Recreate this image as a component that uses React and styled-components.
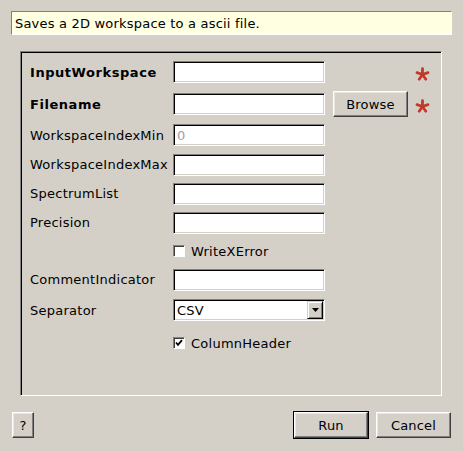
import styled, { createGlobalStyle } from "styled-components"

const GlobalStyle = createGlobalStyle`
  html, body {
    margin: 0;
    padding: 0;
    background: #d4d0c8;
  }
  body {
    font-family: "DejaVu Sans", "Liberation Sans", sans-serif;
    font-size: 13px;
    letter-spacing: 0.2px;
    color: #000;
  }
`

const Window = styled.div`
  width: 463px;
  height: 451px;
  box-sizing: border-box;
  padding-top: 11px;
  background: #d4d0c8;
`

const Description = styled.div`
  margin: 0 11px;
  height: 24px;
  box-sizing: border-box;
  padding-left: 3px;
  display: flex;
  align-items: center;
  background: #ffffe1;
  border: 1px solid;
  border-color: #808080 #ffffff #ffffff #808080;
`

const Panel = styled.div`
  margin: 16px 0 0 20px;
  width: 422px;
  height: 345px;
  box-sizing: border-box;
  padding: 4px 0 0 9px;
  border: 1px solid;
  border-color: #808080 #ffffff #ffffff #808080;
  box-shadow: inset 1px 1px 0 #000;
`

const Row = styled.div`
  display: grid;
  grid-template-columns: 143px 152px 83px 22px;
  align-items: center;
  height: ${props => props.$h}px;
`

const Label = styled.span`
  font-weight: ${props => (props.$bold ? 700 : 400)};
  letter-spacing: ${props => (props.$bold ? 0.55 : 0.25)}px;
  white-space: nowrap;
`

const TextInput = styled.input`
  width: 152px;
  height: 22px;
  box-sizing: border-box;
  margin: 0;
  padding: 0 3px;
  font: inherit;
  color: #000;
  background: #fff;
  border: 1px solid;
  border-color: #808080 #ffffff #ffffff #808080;
  box-shadow: inset 1px 1px 0 #000, inset -1px -1px 0 #d4d0c8;
  outline: none;

  &::placeholder {
    color: #a0a0a0;
  }
`

const Button = styled.button`
  width: ${props => props.$w}px;
  height: 26px;
  box-sizing: border-box;
  margin: 0;
  padding: 0;
  font: inherit;
  letter-spacing: 0.2px;
  color: #000;
  background: #d4d0c8;
  border: 1px solid;
  border-color: #ffffff #404040 #404040 #ffffff;
  box-shadow: inset -1px -1px 0 #808080, inset 1px 1px 0 #e8e6e1;
`

const BrowseButton = styled(Button)`
  justify-self: end;
`

const DefaultFrame = styled.div`
  border: 1px solid #000;
  display: flex;
`

const Required = styled.svg`
  justify-self: end;
  width: 15px;
  height: 14px;
  margin-top: 3px;
`

const CheckRow = styled.label`
  grid-column: 2 / 4;
  display: flex;
  align-items: center;
  gap: 6px;
`

const CheckBox = styled.span`
  width: 12px;
  height: 12px;
  box-sizing: border-box;
  background: #fff;
  border: 1px solid;
  border-color: #808080 #ffffff #ffffff #808080;
  box-shadow: inset 1px 1px 0 #404040;
  display: flex;
  align-items: center;
  justify-content: center;
`

const Combo = styled.div`
  width: 152px;
  height: 22px;
  box-sizing: border-box;
  display: flex;
  align-items: stretch;
  background: #fff;
  border: 1px solid;
  border-color: #808080 #ffffff #ffffff #808080;
  box-shadow: inset 1px 1px 0 #000, inset -1px -1px 0 #d4d0c8;
  padding: 1px;
`

const ComboText = styled.span`
  flex: 1;
  display: flex;
  align-items: center;
  padding-left: 2px;
`

const ComboArrow = styled.span`
  width: 16px;
  box-sizing: border-box;
  background: #d4d0c8;
  border: 1px solid;
  border-color: #d4d0c8 #000 #000 #d4d0c8;
  box-shadow: inset 1px 1px 0 #fff, inset -1px -1px 0 #808080;
  display: flex;
  align-items: center;
  justify-content: center;
`

const Footer = styled.div`
  display: flex;
  align-items: center;
  margin-top: 15px;
  padding: 0 12px;
  gap: 7px;
`

const Spacer = styled.div`
  flex: 1;
`

function Asterisk () {
  return (
    <Required viewBox="0 0 15 14">
      <g stroke="#c0392b" strokeWidth="2.8" strokeLinecap="round">
        <line x1="7.5" y1="7.5" x2="7.5" y2="1.7" />
        <line x1="7.5" y1="7.5" x2="2" y2="5.7" />
        <line x1="7.5" y1="7.5" x2="13" y2="5.7" />
        <line x1="7.5" y1="7.5" x2="4.2" y2="12.2" />
        <line x1="7.5" y1="7.5" x2="10.8" y2="12.2" />
      </g>
    </Required>
  )
}

function Check ({ checked, children }) {
  return (
    <CheckRow>
      <CheckBox>
        {checked && (
          <svg width="8" height="8" viewBox="0 0 8 8">
            <polyline points="1,3.5 3,5.8 7,1.2" fill="none" stroke="#000" strokeWidth="1.8" />
          </svg>
        )}
      </CheckBox>
      <Label>{children}</Label>
    </CheckRow>
  )
}

function App () {
  return (
    <Window>
      <GlobalStyle />
      <Description>Saves a 2D workspace to a ascii file.</Description>
      <Panel>
        <Row $h={32}>
          <Label $bold>InputWorkspace</Label>
          <TextInput />
          <span />
          <Asterisk />
        </Row>
        <Row $h={32}>
          <Label $bold>Filename</Label>
          <TextInput />
          <BrowseButton $w={75}>Browse</BrowseButton>
          <Asterisk />
        </Row>
        <Row $h={30}>
          <Label>WorkspaceIndexMin</Label>
          <TextInput placeholder="0" />
        </Row>
        <Row $h={29}>
          <Label>WorkspaceIndexMax</Label>
          <TextInput />
        </Row>
        <Row $h={29}>
          <Label>SpectrumList</Label>
          <TextInput />
        </Row>
        <Row $h={29}>
          <Label>Precision</Label>
          <TextInput />
        </Row>
        <Row $h={28}>
          <span />
          <Check>WriteXError</Check>
        </Row>
        <Row $h={29}>
          <Label>CommentIndicator</Label>
          <TextInput />
        </Row>
        <Row $h={32}>
          <Label>Separator</Label>
          <Combo>
            <ComboText>CSV</ComboText>
            <ComboArrow>
              <svg width="7" height="4" viewBox="0 0 7 4">
                <polygon points="0,0 7,0 3.5,4" fill="#000" />
              </svg>
            </ComboArrow>
          </Combo>
        </Row>
        <Row $h={34}>
          <span />
          <Check checked>ColumnHeader</Check>
        </Row>
      </Panel>
      <Footer>
        <Button $w={22}>?</Button>
        <Spacer />
        <DefaultFrame>
          <Button $w={74}>Run</Button>
        </DefaultFrame>
        <Button $w={75}>Cancel</Button>
      </Footer>
    </Window>
  )
}

export default App
